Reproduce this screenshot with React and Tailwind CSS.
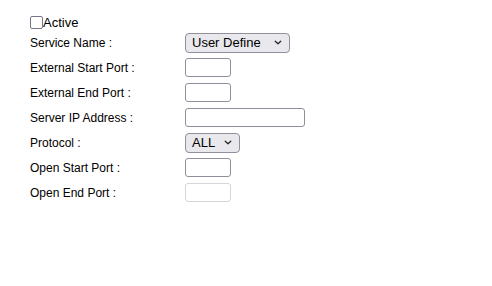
import React from 'react';

const Chevron = () => (
  <svg width="8" height="5" viewBox="0 0 8 5" className="shrink-0">
    <path d="M1.2 1.2 L4 3.8 L6.8 1.2" fill="none" stroke="#222" strokeWidth="1.2" strokeLinecap="round" strokeLinejoin="round" />
  </svg>
);

const Select = ({ value, width }) => (
  <div
    className={`flex h-[20px] items-center justify-between rounded-[4px] border border-[#8f8f9d] bg-[#e9e9ed] pl-[6px] pr-[7px] text-[13px] text-black ${width}`}
  >
    <span>{value}</span>
    <Chevron />
  </div>
);

const TextBox = ({ width, disabled }) => (
  <input
    type="text"
    disabled={disabled}
    className={`h-[19px] rounded-[3px] border bg-white outline-none ${width} ${disabled ? 'border-[#d6d6d6]' : 'border-[#8f8f9d]'}`}
  />
);

const Row = ({ label, children }) => (
  <div className="flex h-[25px] items-center">
    <div className="w-[155px] text-[12px]">{label}</div>
    {children}
  </div>
);

const App = () => {
  return (
    <div className="h-[286px] w-[492px] bg-white pl-[30px] pt-[14px] text-black" style={{ fontFamily: '"Liberation Sans", Arial, sans-serif' }}>
      <div className="flex h-[16px] items-center">
        <span className="h-[13px] w-[13px] rounded-[2px] border border-[#767687] bg-white" />
        <span className="text-[13px] leading-none">Active</span>
      </div>
      <Row label="Service Name :">
        <Select value="User Define" width="w-[105px]" />
      </Row>
      <Row label="External Start Port :">
        <TextBox width="w-[46px]" />
      </Row>
      <Row label="External End Port :">
        <TextBox width="w-[46px]" />
      </Row>
      <Row label="Server IP Address :">
        <TextBox width="w-[120px]" />
      </Row>
      <Row label="Protocol :">
        <Select value="ALL" width="w-[55px]" />
      </Row>
      <Row label="Open Start Port :">
        <TextBox width="w-[46px]" />
      </Row>
      <Row label="Open End Port :">
        <TextBox width="w-[46px]" disabled />
      </Row>
    </div>
  );
};

export default App;
